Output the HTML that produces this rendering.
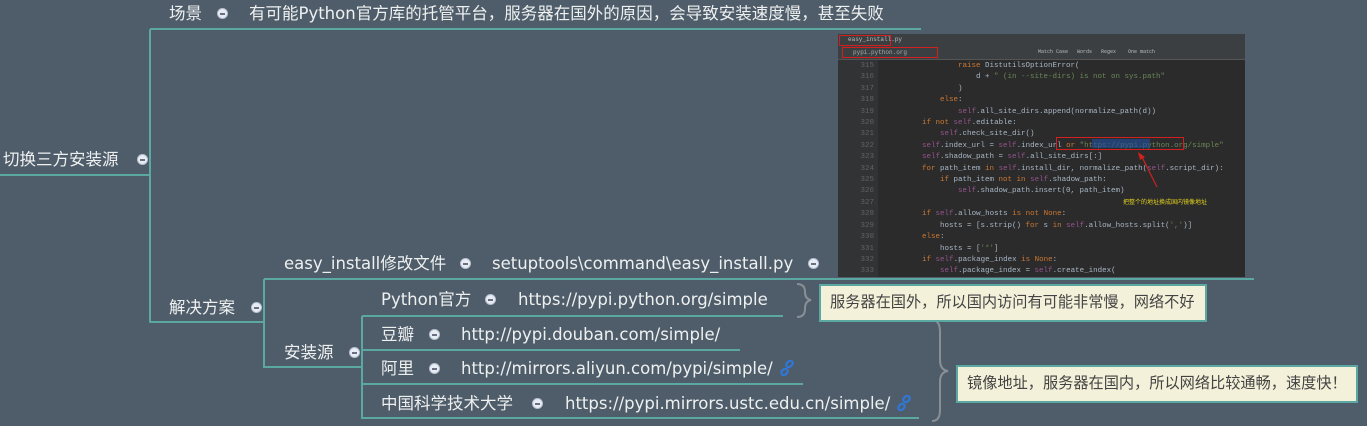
<!DOCTYPE html>
<html><head><meta charset="utf-8">
<style>
*{margin:0;padding:0;box-sizing:border-box}
body{width:1367px;height:426px;background:#4f5d6a;position:relative;overflow:hidden;font-family:"DejaVu Sans","Noto Sans CJK SC",sans-serif;color:#eef0f0;font-size:16.5px}
.t{position:absolute;white-space:nowrap;line-height:20px}
.c{position:absolute;width:11px;height:11px;border-radius:50%;background:#e8ecf4;border:1px solid #b8c0d0}
.c:after{content:"";position:absolute;left:2px;top:4px;width:5px;height:1.5px;background:#6a7080}
.h{position:absolute;height:2px;background:#5aa8a1}
.v{position:absolute;width:2px;background:#5aa8a1}
.box{position:absolute;background:#f3f1d9;border:2px solid #5aa8a1;color:#444;font-family:"Liberation Sans","Noto Sans CJK SC",sans-serif;font-size:15.2px;line-height:34px;padding-left:9px;white-space:nowrap}
.code{position:absolute;left:838px;top:34px;width:407px;height:243px;background:#2b2b2b;overflow:hidden;font-family:"Liberation Mono",monospace;font-size:7.5px;color:#a9b7c6}
.ln{position:absolute;left:0;width:40px;color:#606366;text-align:right;padding-right:4px}
.cl{position:absolute;white-space:pre}
.k{color:#cc7832}.s{color:#6a8759}.p{color:#94558d}
.lk{display:inline-block;vertical-align:-2px;margin-left:6px}
</style></head><body>
<div class="h" style="left:0;top:174px;width:150px"></div>
<div class="v" style="left:149px;top:29px;height:294px;border-radius:4px"></div>
<div class="h" style="left:150px;top:28px;width:771px"></div>
<div class="h" style="left:150px;top:321px;width:115px"></div>
<div class="v" style="left:263px;top:279px;height:89px"></div>
<div class="h" style="left:264px;top:278px;width:990px"></div>
<div class="h" style="left:264px;top:366px;width:99px"></div>
<div class="v" style="left:361px;top:316px;height:103px"></div>
<div class="h" style="left:362px;top:315px;width:421px"></div>
<div class="h" style="left:362px;top:349px;width:378px"></div>
<div class="h" style="left:362px;top:383px;width:441px"></div>
<div class="h" style="left:362px;top:417px;width:557px"></div>

<div class="t" style="left:3px;top:150px">切换三方安装源</div><div class="c" style="left:137px;top:154px"></div>
<div class="t" style="left:169px;top:4px">场景</div><div class="c" style="left:217px;top:8px"></div>
<div class="t" style="left:249px;top:4px">有可能Python官方库的托管平台，服务器在国外的原因，会导致安装速度慢，甚至失败</div>
<div class="t" style="left:169px;top:298px">解决方案</div><div class="c" style="left:251px;top:302px"></div>
<div class="t" style="left:284px;top:254px">easy_install修改文件</div><div class="c" style="left:460px;top:258px"></div>
<div class="t" style="left:492px;top:254px">setuptools\command\easy_install.py</div><div class="c" style="left:808px;top:258px"></div>
<div class="t" style="left:284px;top:343px">安装源</div><div class="c" style="left:349px;top:347px"></div>
<div class="t" style="left:381px;top:290px">Python官方</div><div class="c" style="left:485px;top:294px"></div>
<div class="t" style="left:518px;top:290px">https://pypi.python.org/simple</div>
<div class="t" style="left:381px;top:325px">豆瓣</div><div class="c" style="left:429px;top:329px"></div>
<div class="t" style="left:461px;top:325px">http://pypi.douban.com/simple/</div>
<div class="t" style="left:381px;top:359px">阿里</div><div class="c" style="left:429px;top:363px"></div>
<div class="t" style="left:461px;top:359px">http://mirrors.aliyun.com/pypi/simple/<svg class="lk" width="16" height="16" viewBox="0 0 16 16"><g fill="none" stroke="#2f78d8" stroke-width="2.2"><rect x="7" y="1.5" width="7" height="5" rx="2.5" transform="rotate(-45 10.5 4)"/><rect x="2" y="9.5" width="7" height="5" rx="2.5" transform="rotate(-45 5.5 12)"/></g></svg></div>
<div class="t" style="left:381px;top:394px">中国科学技术大学</div><div class="c" style="left:532px;top:398px"></div>
<div class="t" style="left:565px;top:394px">https://pypi.mirrors.ustc.edu.cn/simple/<svg class="lk" width="16" height="16" viewBox="0 0 16 16"><g fill="none" stroke="#2f78d8" stroke-width="2.2"><rect x="7" y="1.5" width="7" height="5" rx="2.5" transform="rotate(-45 10.5 4)"/><rect x="2" y="9.5" width="7" height="5" rx="2.5" transform="rotate(-45 5.5 12)"/></g></svg></div>

<svg style="position:absolute;left:795px;top:282px" width="22" height="38"><path d="M2 2 Q10 2 10 10 Q10 17 16 18 Q10 19 10 27 Q10 35 2 35" fill="none" stroke="#8a8f95" stroke-width="2"/></svg>
<svg style="position:absolute;left:930px;top:318px" width="24" height="106"><path d="M2 2 Q10 2 10 14 L10 42 Q10 52 18 53 Q10 54 10 64 L10 92 Q10 103 2 103" fill="none" stroke="#8a8f95" stroke-width="2"/></svg>

<div class="box" style="left:819px;top:284px;width:388px;height:38px">服务器在国外，所以国内访问有可能非常慢，网络不好</div>
<div class="box" style="left:956px;top:365px;width:402px;height:38px">镜像地址，服务器在国内，所以网络比较通畅，速度快！</div>

<div class="code">
<div style="position:absolute;left:0;top:0;width:407px;height:12px;background:#3c3f41"></div>
<div style="position:absolute;left:1px;top:1px;width:52px;height:11px;border:1px solid #d02020;color:#bbb;font-size:6px;padding-left:8px">easy_install.py</div>
<div style="position:absolute;left:0;top:12px;width:407px;height:14px;background:#3c3f41;border-bottom:1px solid #555"></div>
<div style="position:absolute;left:4px;top:13px;width:96px;height:11px;border:1px solid #d02020;color:#aaa;font-size:6px;padding-left:10px;line-height:9px">pypi.python.org</div>
<div style="position:absolute;left:200px;top:15px;color:#bbb;font-size:5px;white-space:pre">Match Case   Words   Regex    One match</div>
<div style="position:absolute;left:0;top:26px;width:40px;height:217px;background:#313335"></div>
<div class="ln" style="top:27px;line-height:11.4px">315<br>316<br>317<br>318<br>319<br>320<br>321<br>322<br>323<br>324<br>325<br>326<br>327<br>328<br>329<br>330<br>331<br>332<br>333</div>
<div class="cl" style="left:48px;top:27px;line-height:11.4px">                <span class="k">raise</span> DistutilsOptionError(
                    d + <span class="s">" (in --site-dirs) is not on sys.path"</span>
                )
            <span class="k">else</span>:
                <span class="p">self</span>.all_site_dirs.append(normalize_path(d))
        <span class="k">if not</span> <span class="p">self</span>.editable:
            <span class="p">self</span>.check_site_dir()
        <span class="p">self</span>.index_url = <span class="p">self</span>.index_url <span class="k">or</span> <span class="s">"https://pypi.python.org/simple"</span>
        <span class="p">self</span>.shadow_path = <span class="p">self</span>.all_site_dirs[:]
        <span class="k">for</span> path_item <span class="k">in</span> <span class="p">self</span>.install_dir, normalize_path(<span class="p">self</span>.script_dir):
            <span class="k">if</span> path_item <span class="k">not in</span> <span class="p">self</span>.shadow_path:
                <span class="p">self</span>.shadow_path.insert(0, path_item)

        <span class="k">if</span> <span class="p">self</span>.allow_hosts <span class="k">is not None</span>:
            hosts = [s.strip() <span class="k">for</span> s <span class="k">in</span> <span class="p">self</span>.allow_hosts.split(<span class="s">','</span>)]
        <span class="k">else</span>:
            hosts = [<span class="s">'*'</span>]
        <span class="k">if</span> <span class="p">self</span>.package_index <span class="k">is None</span>:
            <span class="p">self</span>.package_index = <span class="p">self</span>.create_index(</div>
<div style="position:absolute;left:218px;top:103px;width:128px;height:13px;border:1px solid #d02020"></div>
<div style="position:absolute;left:254px;top:105px;width:58px;height:9px;background:#2150a0;opacity:.6"></div>
<svg style="position:absolute;left:295px;top:116px" width="30" height="40"><path d="M24 37 L8 5" stroke="#d02020" stroke-width="1.2"/><path d="M5 2 L7 10 L12 7 Z" fill="#d02020"/></svg>
<div style="position:absolute;left:285px;top:163px;color:#e0d020;font-size:6px;font-family:'Noto Sans CJK SC',sans-serif">把整个的地址换成国内镜像地址</div>
</div>
</body></html>
